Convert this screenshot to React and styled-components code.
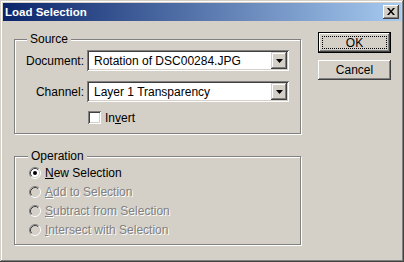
import React from "react";
import styled, { createGlobalStyle } from "styled-components";

const Global = createGlobalStyle`
  html, body { margin: 0; padding: 0; background: #d4d0c8; }
  * { box-sizing: border-box; }
`;

const Window = styled.div`
  width: 404px;
  height: 262px;
  padding: 3px;
  background: #d4d0c8;
  font-family: "Liberation Sans", Arial, sans-serif;
  font-size: 12px;
  color: #000;
  box-shadow: inset -1px -1px #404040, inset 1px 1px #d4d0c8,
    inset -2px -2px #808080, inset 2px 2px #fff;
  display: flex;
  flex-direction: column;
`;

const TitleBar = styled.div`
  height: 18px;
  display: flex;
  align-items: center;
  justify-content: space-between;
  padding: 0 2px 0 2px;
  background: linear-gradient(to right, #0a246a, #a6caf0);
`;

const Title = styled.span`
  color: #fff;
  font-weight: bold;
  font-size: 11.5px;
`;

const CloseButton = styled.div`
  width: 16px;
  height: 14px;
  background: #d4d0c8;
  box-shadow: inset -1px -1px #404040, inset 1px 1px #fff,
    inset -2px -2px #808080, inset 2px 2px #d4d0c8;
  display: flex;
  align-items: center;
  justify-content: center;
  padding-bottom: 1px;
`;

const Body = styled.div`
  display: flex;
  gap: 17px;
  padding: 11px 0 0 11px;
`;

const Column = styled.div`
  display: flex;
  flex-direction: column;
  gap: ${(p) => p.$gap || 0}px;
`;

const Group = styled.fieldset`
  margin: 0;
  width: 287px;
  border: 1px solid #808080;
  box-shadow: 1px 1px 0 #fff, inset 1px 1px 0 #fff;
  padding: ${(p) => p.$pad};
`;

const Legend = styled.legend`
  margin-left: ${(p) => p.$offset}px;
  padding: 0 3px;
  line-height: 14px;
  background: #d4d0c8;
`;

const FormGrid = styled.div`
  display: grid;
  grid-template-columns: 62px 202px;
  column-gap: 3px;
  row-gap: 10px;
  align-items: center;
`;

const Label = styled.label`
  text-align: right;
  white-space: nowrap;
`;

const Select = styled.div`
  height: 21px;
  background: #fff;
  display: flex;
  align-items: center;
  padding: 2px;
  box-shadow: inset 1px 1px #808080, inset -1px -1px #fff,
    inset 2px 2px #404040, inset -2px -2px #d4d0c8;
`;

const SelectText = styled.span`
  flex: 1;
  padding-left: 5px;
  white-space: nowrap;
`;

const DropButton = styled.div`
  width: 16px;
  height: 17px;
  background: #d4d0c8;
  box-shadow: inset -1px -1px #404040, inset 1px 1px #d4d0c8,
    inset -2px -2px #808080, inset 2px 2px #fff;
  display: flex;
  align-items: center;
  justify-content: center;
`;

const CheckRow = styled.div`
  grid-column: 2;
  display: flex;
  align-items: center;
  gap: 4px;
  padding-left: 1px;
  height: 13px;
  margin-top: -1px;
`;

const CheckBox = styled.span`
  width: 13px;
  height: 13px;
  background: #fff;
  box-shadow: inset 1px 1px #808080, inset -1px -1px #fff,
    inset 2px 2px #404040, inset -2px -2px #d4d0c8;
`;

const RadioRow = styled.div`
  height: 19px;
  display: flex;
  align-items: center;
  gap: 4px;
  color: ${(p) => (p.$disabled ? "#808080" : "#000")};
  text-shadow: ${(p) => (p.$disabled ? "1px 1px 0 #fff" : "none")};
`;

const Key = styled.span`
  text-decoration: underline;
  text-underline-offset: 1px;
`;

const Button = styled.div`
  width: 73px;
  height: ${(p) => (p.$default ? 21 : 20)}px;
  background: #d4d0c8;
  display: flex;
  align-items: center;
  justify-content: center;
  position: relative;
  border: ${(p) => (p.$default ? "1px solid #000" : "none")};
  box-shadow: inset -1px -1px #404040, inset 1px 1px #fff,
    inset -2px -2px #808080;
`;

const Focus = styled.span`
  position: absolute;
  inset: 3px;
  border: 1px dotted #000;
`;

const Arrow = () => (
  <svg width="7" height="4" viewBox="0 0 7 4">
    <path d="M0 0h7L3.5 4z" fill="#000" />
  </svg>
);

const Radio = ({ checked, disabled }) => (
  <svg width="12" height="12" viewBox="0 0 12 12">
    <circle cx="6" cy="6" r="4.5" fill={disabled ? "#d4d0c8" : "#fff"} />
    <path d="M2.11 9.89A5.5 5.5 0 0 1 9.89 2.11" stroke="#808080" fill="none" />
    <path d="M9.89 2.11A5.5 5.5 0 0 1 2.11 9.89" stroke="#fff" fill="none" />
    <path d="M2.82 9.18A4.5 4.5 0 0 1 9.18 2.82" stroke="#404040" fill="none" />
    <path d="M9.18 2.82A4.5 4.5 0 0 1 2.82 9.18" stroke="#d4d0c8" fill="none" />
    {checked && <circle cx="6" cy="6" r="2" fill="#000" />}
  </svg>
);

const ops = [
  { key: "N", rest: "ew Selection", checked: true },
  { key: "A", rest: "dd to Selection", disabled: true },
  { key: "S", rest: "ubtract from Selection", disabled: true },
  { key: "I", rest: "ntersect with Selection", disabled: true },
];

export default function App() {
  return (
    <Window>
      <Global />
      <TitleBar>
        <Title>Load Selection</Title>
        <CloseButton>
          <svg width="8" height="7" viewBox="0 0 8 7">
            <path d="M0 0h2l2 2.5L6 0h2L5 3.5 8 7H6L4 4.5 2 7H0l3-3.5z" fill="#000" />
          </svg>
        </CloseButton>
      </TitleBar>
      <Body>
        <Column $gap={15}>
          <Group $pad="4px 9px 9px 7px">
            <Legend $offset={5}>Source</Legend>
            <FormGrid>
              <Label>Document:</Label>
              <Select>
                <SelectText>Rotation of DSC00284.JPG</SelectText>
                <DropButton><Arrow /></DropButton>
              </Select>
              <Label>Channel:</Label>
              <Select>
                <SelectText>Layer 1 Transparency</SelectText>
                <DropButton><Arrow /></DropButton>
              </Select>
              <CheckRow>
                <CheckBox />
                <span>In<Key>v</Key>ert</span>
              </CheckRow>
            </FormGrid>
          </Group>
          <Group $pad="0 9px 5px 14px">
            <Legend $offset={-1}>Operation</Legend>
            {ops.map((o) => (
              <RadioRow key={o.key} $disabled={o.disabled}>
                <Radio checked={o.checked} disabled={o.disabled} />
                <span><Key>{o.key}</Key>{o.rest}</span>
              </RadioRow>
            ))}
          </Group>
        </Column>
        <Column $gap={7}>
          <Button $default>
            <Focus />
            OK
          </Button>
          <Button>Cancel</Button>
        </Column>
      </Body>
    </Window>
  );
}
